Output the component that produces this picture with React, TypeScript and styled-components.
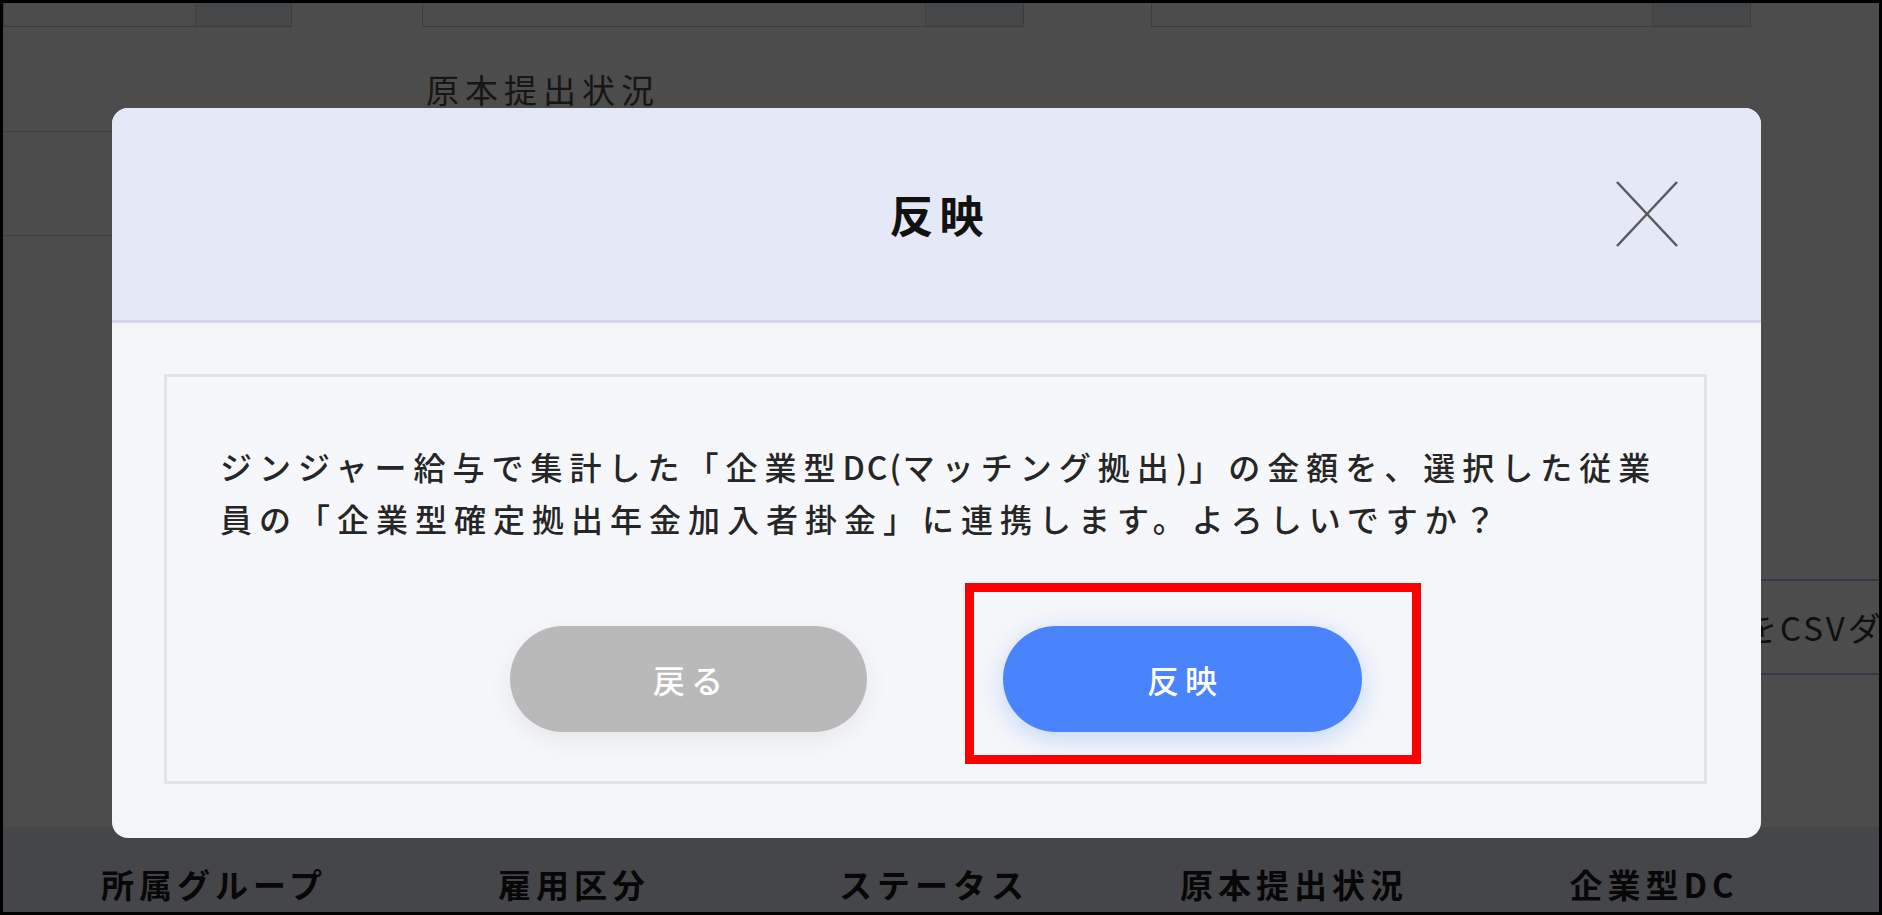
import React from 'react';
import styled, { createGlobalStyle } from 'styled-components';

const GlobalStyle = createGlobalStyle`
  html, body {
    margin: 0;
    padding: 0;
  }
  body {
    font-family: "Noto Sans CJK JP", "Noto Sans", sans-serif;
    background: #000;
  }
  * { box-sizing: border-box; }
`;

const Frame = styled.div`
  position: relative;
  width: 1882px;
  height: 915px;
  border: 3px solid #000;
  background: #fff;
  overflow: hidden;
  color: #333;
`;

/* ---- page behind the dialog ---- */

const FilterRow = styled.div`
  display: flex;
  height: 24px;
`;

const SelectBox = styled.div<{ $width: number; $offset: number }>`
  display: flex;
  justify-content: flex-end;
  width: ${({ $width }) => $width}px;
  margin-left: ${({ $offset }) => $offset}px;
  height: 100%;
  border: 1px solid #c9cbd0;
  border-top: none;
  background: #fbfbfb;
`;

const SelectArrow = styled.div<{ $width: number }>`
  width: ${({ $width }) => $width}px;
  background: #eceef2;
  border-left: 1px solid #d5d7dc;
`;

const FieldLabel = styled.div`
  margin: 40px 0 0 423px;
  font-size: 33px;
  letter-spacing: 6px;
  line-height: 45px;
  color: #4a4a4a;
`;

const SideList = styled.div`
  width: 300px;
  margin-top: 19px;
  border-top: 1px solid #d6d6d6;
`;

const SideRow = styled.div`
  height: 104px;
  border-bottom: 1px solid #d6d6d6;
`;

const ActionRow = styled.div`
  display: flex;
  margin-top: 343px;
  padding-left: 1591px;
`;

const CsvButton = styled.div`
  flex-shrink: 0;
  display: flex;
  align-items: center;
  height: 96px;
  padding: 0 40px;
  border: 2px solid #a9c7e8;
  border-radius: 6px;
  font-size: 33px;
  letter-spacing: 3px;
  white-space: nowrap;
  color: #333;
`;

const TableHead = styled.div`
  display: grid;
  grid-template-columns: repeat(5, 360px);
  align-items: center;
  height: 114px;
  margin-top: 152px;
  padding-left: 31px;
  background: #e8ebf3;
`;

const HeadCell = styled.div`
  text-align: center;
  font-size: 33px;
  font-weight: 700;
  letter-spacing: 5px;
  color: #1a1a1a;
`;

/* ---- dialog ---- */

const Backdrop = styled.div`
  position: absolute;
  inset: 0;
  display: flex;
  justify-content: center;
  align-items: flex-start;
  padding: 105px 9px 0 0;
  background: rgba(0, 0, 0, 0.7);
`;

const Modal = styled.div`
  width: 1649px;
  border-radius: 16px;
  overflow: hidden;
  background: #f5f6fa;
`;

const ModalHeader = styled.div`
  display: grid;
  grid-template-columns: 1fr auto 1fr;
  align-items: center;
  height: 215px;
  background: #e5e8f6;
  border-bottom: 3px solid #d3d8ef;
`;

const Title = styled.h2`
  grid-column: 2;
  margin: 0;
  padding-left: 6px;
  font-size: 44px;
  font-weight: 700;
  letter-spacing: 6px;
  color: #111;
`;

const CloseButton = styled.button`
  justify-self: end;
  display: flex;
  margin-right: 83px;
  padding: 0;
  border: none;
  background: none;
  cursor: pointer;
`;

const ModalBody = styled.div`
  padding: 51px 54px 54px 52px;
`;

const MessageBox = styled.div`
  padding: 63px 53px 49px;
  border: 3px solid #e2e3e7;
  background: #f6f7fa;
`;

const Message = styled.p`
  margin: 0;
  font-size: 32px;
  font-weight: 500;
  letter-spacing: 7px;
  line-height: 52px;
  white-space: nowrap;
  color: #262626;
`;

const Latin = styled.span`
  letter-spacing: 2px;
`;

const ButtonRow = styled.div`
  display: flex;
  justify-content: center;
  gap: 136px;
  margin-top: 82px;
`;

const PillButton = styled.button<{ $primary?: boolean }>`
  width: ${({ $primary }) => ($primary ? 359 : 357)}px;
  height: 106px;
  padding: 0 0 0 6px;
  border: none;
  border-radius: 53px;
  font-family: inherit;
  font-size: 32px;
  font-weight: 500;
  letter-spacing: 6px;
  color: #fff;
  cursor: pointer;
  background: ${({ $primary }) => ($primary ? '#4a84fc' : '#b9b9b9')};
  box-shadow: ${({ $primary }) =>
    $primary ? '0 6px 28px rgba(74, 132, 252, 0.3)' : '0 8px 28px rgba(0, 0, 0, 0.07)'};
`;

const Highlight = styled.div`
  position: relative;
  display: flex;

  &::after {
    content: '';
    position: absolute;
    top: -43px;
    left: -38px;
    right: -59px;
    bottom: -32px;
    border: 9px solid #f00;
    pointer-events: none;
  }
`;

function CloseIcon() {
  return (
    <svg width="62" height="66" viewBox="0 0 62 66" fill="none">
      <line x1="1" y1="1" x2="61" y2="65" stroke="#5a5a5a" strokeWidth="2.5" />
      <line x1="61" y1="1" x2="1" y2="65" stroke="#5a5a5a" strokeWidth="2.5" />
    </svg>
  );
}

const HEADS = ['所属グループ', '雇用区分', 'ステータス', '原本提出状況', '企業型DC'];

export default function App() {
  return (
    <>
      <GlobalStyle />
      <Frame>
        <FilterRow>
          <SelectBox $width={289} $offset={0}>
            <SelectArrow $width={96} />
          </SelectBox>
          <SelectBox $width={602} $offset={130}>
            <SelectArrow $width={98} />
          </SelectBox>
          <SelectBox $width={600} $offset={127}>
            <SelectArrow $width={98} />
          </SelectBox>
        </FilterRow>
        <FieldLabel>原本提出状況</FieldLabel>
        <SideList>
          <SideRow />
        </SideList>
        <ActionRow>
          <CsvButton>データをCSVダウンロード</CsvButton>
        </ActionRow>
        <TableHead>
          {HEADS.map((h) => (
            <HeadCell key={h}>{h}</HeadCell>
          ))}
        </TableHead>

        <Backdrop>
          <Modal role="dialog">
            <ModalHeader>
              <Title>反映</Title>
              <CloseButton aria-label="close">
                <CloseIcon />
              </CloseButton>
            </ModalHeader>
            <ModalBody>
              <MessageBox>
                <Message>
                  ジンジャー給与で集計した「企業型<Latin>DC(</Latin>マッチング拠出<Latin>)</Latin>」の金額を、選択した従業
                  <br />
                  員の「企業型確定拠出年金加入者掛金」に連携します。よろしいですか？
                </Message>
                <ButtonRow>
                  <PillButton>戻る</PillButton>
                  <Highlight>
                    <PillButton $primary>反映</PillButton>
                  </Highlight>
                </ButtonRow>
              </MessageBox>
            </ModalBody>
          </Modal>
        </Backdrop>
      </Frame>
    </>
  );
}
